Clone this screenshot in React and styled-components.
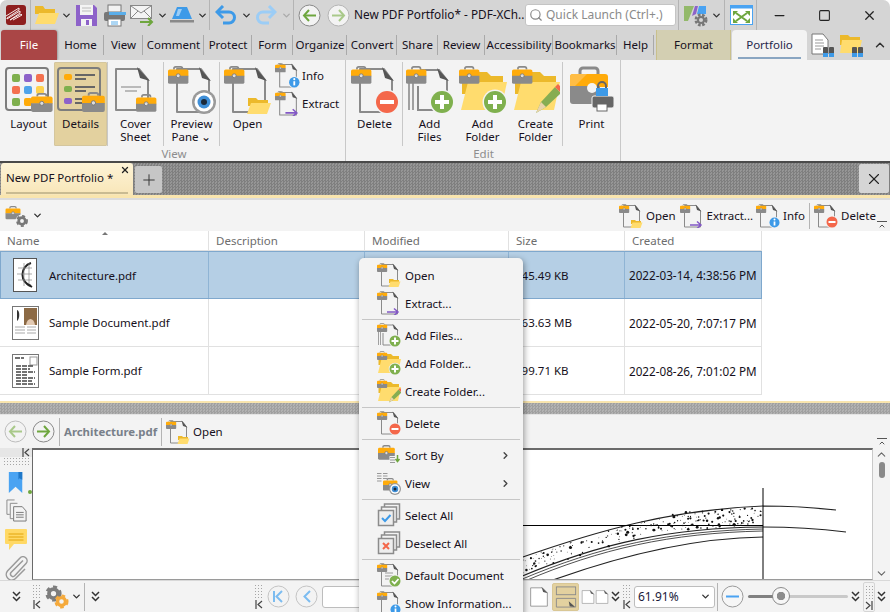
import React from 'react'
import styled, { createGlobalStyle } from 'styled-components'
import { Search, Minus, Square, X, Plus, ChevronDown, ChevronUp, ChevronRight } from 'lucide-react'

const GlobalStyle = createGlobalStyle`
  html, body { margin: 0; padding: 0; background: #fff; }
  body { font-family: "Noto Sans", "Liberation Sans", sans-serif; font-size: 11.5px; color: #161020; }
`

const Window = styled.div`
  position: relative;
  width: 890px;
  height: 612px;
  display: flex;
  flex-direction: column;
  overflow: hidden;
  background: #f3f3f3;
  border-radius: 7px 7px 0 0;
`

/* title bar */
const TitleBar = styled.div`
  height: 30px;
  flex: none;
  display: flex;
  align-items: center;
  padding-left: 4px;
  background: #d5d5d5;
`
const Quick = styled.div`
  width: ${p => p.$w}px;
  height: 30px;
  flex: none;
  display: flex;
  align-items: center;
  justify-content: center;
`
const VLine = styled.div`
  width: 1px;
  height: ${p => p.$h || 30}px;
  flex: none;
  background: #b4b4b4;
  margin: 0 ${p => p.$m ?? 1}px;
`
const TitleText = styled.div`
  width: 172px;
  flex: none;
  padding: 0 0 2px 1px;
  box-sizing: border-box;
  white-space: nowrap;
  overflow: hidden;
  font-size: 11.8px;
`
const QuickLaunch = styled.div`
  width: 151px;
  height: 22px;
  flex: none;
  box-sizing: border-box;
  display: flex;
  align-items: center;
  gap: 3px;
  padding: 0 0 1px 3px;
  background: #fff;
  border: 1px solid #c4c4c4;
  border-radius: 3px;
  color: #8b8b8b;
  font-size: 12px;
  white-space: nowrap;
`
const WinButton = styled.div`
  width: 45px;
  height: 30px;
  flex: none;
  display: flex;
  align-items: center;
  justify-content: center;
  color: #222;
`

/* ribbon tabs */
const TabRow = styled.div`
  height: 30px;
  flex: none;
  display: flex;
  align-items: stretch;
  background: #d5d5d5;
`
const FileTab = styled.div`
  width: 56px;
  margin-left: 1px;
  padding-bottom: 2px;
  box-sizing: border-box;
  display: flex;
  align-items: center;
  justify-content: center;
  background: #aa4646;
  border-radius: 3px 3px 0 0;
  box-shadow: 1px 0 2px rgba(0,0,0,.25);
  color: #fff;
`
const RibbonTab = styled.div`
  width: ${p => p.$w}px;
  flex: none;
  padding-bottom: 2px;
  box-sizing: border-box;
  display: flex;
  align-items: center;
  justify-content: center;
  white-space: nowrap;
  position: relative;
  &::after {
    content: '';
    position: absolute;
    right: 0;
    top: 5px;
    bottom: 5px;
    width: 1px;
    background: #a9a9a9;
  }
`
const FormatTab = styled.div`
  width: 75px;
  margin-left: 2px;
  padding-bottom: 2px;
  flex: none;
  display: flex;
  align-items: center;
  justify-content: center;
  background: #d3cfb2;
  border: solid #c9c08c;
  border-width: 0 1px;
  box-sizing: border-box;
`
const PortfolioTab = styled.div`
  width: 75px;
  margin-left: 1px;
  padding-bottom: 2px;
  flex: none;
  box-sizing: border-box;
  display: flex;
  align-items: center;
  justify-content: center;
  position: relative;
  background: #f3f3f3;
  border-radius: 4px 4px 0 0;
  color: #26264a;
  &::after {
    content: '';
    position: absolute;
    left: 6px;
    right: 6px;
    bottom: 1px;
    height: 2px;
    background: #8aa6c2;
  }
`
const TabTools = styled.div`
  display: flex;
  align-items: center;
  gap: 4px;
  padding-left: 3px;
`
const Collapse = styled.div`
  margin-left: auto;
  width: 20px;
  display: flex;
  align-items: center;
  justify-content: center;
  color: #333;
`

/* ribbon */
const Ribbon = styled.div`
  height: 101px;
  flex: none;
  display: flex;
  background: #f3f3f3;
  border-bottom: 2px solid #4a4a4a;
`
const Group = styled.div`
  width: ${p => p.$w}px;
  flex: none;
  box-sizing: border-box;
  padding: 2px 0 0 ${p => p.$pad || 0}px;
  display: flex;
  flex-direction: column;
  border-right: 1px solid #c8c8c8;
`
const GroupBody = styled.div`
  height: 84px;
  display: flex;
`
const GroupLabel = styled.div`
  text-align: center;
  color: #8d8d8d;
  line-height: 13px;
  padding-top: 1px;
`
const RibbonButton = styled.div`
  width: ${p => p.$w}px;
  flex: none;
  box-sizing: border-box;
  display: flex;
  flex-direction: column;
  align-items: center;
  padding-top: 3px;
  line-height: 13px;
  text-align: center;
  background: ${p => (p.$on ? '#e3d19f' : 'transparent')};
  border: 1px solid ${p => (p.$on ? '#d4c69e' : 'transparent')};
  border-radius: 1px;
  svg { margin-bottom: 3px; flex: none; }
`
const SmallStack = styled.div`
  display: flex;
  flex-direction: column;
  gap: 3px;
  padding-top: 1px;
`
const SmallButton = styled.div`
  display: flex;
  align-items: center;
  gap: 2px;
`
const GroupLine = styled.div`
  width: 1px;
  flex: none;
  background: #c8c8c8;
`

/* document tabs */
const dither = `repeating-conic-gradient(#7f7f7f 0 25%, #969696 0 50%) 0 0 / 3px 3px`
const TabStrip = styled.div`
  height: 32px;
  flex: none;
  display: flex;
  align-items: flex-end;
  background: ${dither};
`
const DocTab = styled.div`
  width: 132px;
  height: 32px;
  margin-left: 1px;
  padding: 0 0 3px 5px;
  box-sizing: border-box;
  position: relative;
  display: flex;
  align-items: center;
  background: linear-gradient(#fdf3d6, #f8e6b8);
  border-radius: 3px 3px 0 0;
  white-space: nowrap;
  &::after {
    content: '';
    position: absolute;
    left: 5px;
    right: 5px;
    bottom: 1px;
    height: 2px;
    background: #c9bb92;
  }
`
const TabClose = styled.span`
  position: absolute;
  right: 3px;
  top: 2px;
  display: flex;
  color: #222;
`
const NewTab = styled.div`
  width: 27px;
  height: 27px;
  margin: 0 0 2px 2px;
  display: flex;
  align-items: center;
  justify-content: center;
  background: #c6c6c6;
  border-radius: 2px;
  color: #333;
`
const StripClose = styled.div`
  width: 30px;
  height: 29px;
  margin: 0 1px 2px auto;
  display: flex;
  align-items: center;
  justify-content: center;
  background: #d5d5d5;
  border-radius: 2px;
  color: #222;
`
const AccentLine = styled.div`
  height: 3px;
  flex: none;
  background: #f9e5ae;
  border-bottom: 2px solid #dcdcdc;
`

/* portfolio toolbar */
const Toolbar = styled.div`
  height: ${p => p.$h}px;
  flex: none;
  display: flex;
  align-items: center;
  background: #f3f3f3;
  padding-left: ${p => p.$pad || 0}px;
  position: relative;
`
const ToolButton = styled.div`
  display: flex;
  align-items: center;
  gap: 3px;
  margin-left: ${p => p.$ml || 0}px;
  white-space: nowrap;
`
const PushRight = styled.div`
  margin-left: auto;
  display: flex;
  align-items: center;
`
const BarCollapse = styled.div`
  position: absolute;
  right: 3px;
  bottom: 0;
  width: 10px;
  height: 9px;
  border-top: 1px solid #555;
  display: flex;
  justify-content: center;
  color: #555;
`

/* file table */
const Table = styled.div`
  height: 170px;
  flex: none;
  background: #fff;
`
const Columns = styled.div`
  display: grid;
  grid-template-columns: 209px 156px 144px 116px 137px;
  width: 762px;
  box-sizing: border-box;
  height: ${p => p.$h}px;
  background: ${p => (p.$selected ? '#b5cfe5' : 'transparent')};
  outline: ${p => (p.$selected ? '1px solid #7fa8cd' : 'none')};
  outline-offset: -1px;
  border-bottom: ${p => (p.$selected ? '0' : '1px solid #e1e1e1')};
`
const HeadCell = styled.div`
  position: relative;
  display: flex;
  align-items: center;
  padding-left: 7px;
  color: #6d6d6d;
  border-right: 1px solid #e1e1e1;
`
const SortMark = styled.span`
  position: absolute;
  top: 1px;
  left: 102px;
  border: 3px solid transparent;
  border-top: 0;
  border-bottom: 3px solid #777;
`
const Cell = styled.div`
  display: flex;
  align-items: center;
  gap: 7px;
  padding-left: ${p => p.$pad ?? 3}px;
  border-right: 1px solid ${p => (p.$selected ? '#8fb4d4' : '#e1e1e1')};
  white-space: nowrap;
  overflow: hidden;
  font-size: ${p => (p.$date ? '11.7px' : 'inherit')};
`
const ThumbBox = styled.div`
  width: 34px;
  margin-left: 8px;
  flex: none;
  display: flex;
  justify-content: center;
`

/* splitter */
const Splitter = styled.div`
  height: 14px;
  flex: none;
  box-sizing: border-box;
  border-top: 2px solid #f9e5ae;
  border-bottom: 1px solid #e4e4e4;
  background: repeating-conic-gradient(#a0a0a0 0 25%, #b2b2b2 0 50%) 0 0 / 3px 3px;
`
const FileName = styled.div`
  font-weight: 700;
  color: #78808a;
  font-size: 11.4px;
`

/* viewer */
const DocRow = styled.div`
  flex: 1;
  min-height: 0;
  display: flex;
`
const SideBar = styled.div`
  width: 32px;
  flex: none;
  display: flex;
  flex-direction: column;
  align-items: center;
  background: #f3f3f3;
`
const SideHead = styled.div`
  align-self: stretch;
  height: 10px;
  background: #e6e6e6;
  display: flex;
  justify-content: flex-end;
  align-items: center;
  padding-right: 2px;
`
const Grip = styled.div`
  width: ${p => p.$w}px;
  height: ${p => p.$h}px;
  flex: none;
  background: radial-gradient(#a5a5a5 0.8px, transparent 1px) 0 0 / 3px 3px;
`
const SideIcons = styled.div`
  position: relative;
  display: flex;
  flex-direction: column;
  align-items: center;
  gap: 5px;
  margin-top: 4px;
`
const GreenDot = styled.span`
  position: absolute;
  right: -4px;
  top: 19px;
  width: 4px;
  height: 4px;
  border-radius: 50%;
  background: #6ea63e;
`
const Viewer = styled.div`
  flex: 1;
  box-sizing: border-box;
  background: #fff;
  border: 1px solid #6a6a6a;
  border-top-width: 2px;
  border-right-color: #c9c9c9;
  border-bottom-color: #9a9a9a;
  overflow: hidden;
  svg { display: block; }
`
const ScrollBar = styled.div`
  width: 17px;
  flex: none;
  display: flex;
  flex-direction: column;
  align-items: center;
  color: #666;
`
const ScrollThumb = styled.div`
  width: 6px;
  height: 16px;
  margin-top: 1px;
  border-radius: 3px;
  background: #8a8a8a;
`
const ScrollTrack = styled.div`
  flex: 1;
`

/* status bar */
const StatusBar = styled.div`
  height: 32px;
  flex: none;
  display: flex;
  align-items: center;
  background: #f3f3f3;
  border-top: 1px solid #d8d8d8;
  box-sizing: border-box;
  color: #333;
  svg { flex: none; }
`
const Gap = styled.div`
  width: ${p => p.$w}px;
  flex: none;
  display: flex;
  justify-content: center;
  align-items: center;
`
const GripCell = styled.div`
  width: ${p => p.$w || 10}px;
  flex: none;
  display: flex;
  flex-direction: column;
  align-items: center;
  gap: 1px;
`
const PageInput = styled.div`
  width: 60px;
  height: 22px;
  flex: none;
  box-sizing: border-box;
  background: #fff;
  border: 1px solid #bdbdbd;
  border-radius: 3px;
`
const ViewToggle = styled.div`
  width: 27px;
  height: 28px;
  flex: none;
  display: flex;
  align-items: center;
  justify-content: center;
  background: ${p => (p.$on ? '#e3d19f' : 'transparent')};
  border: 1px solid ${p => (p.$on ? '#d9c795' : 'transparent')};
  border-radius: 2px;
  box-sizing: border-box;
`
const ZoomSelect = styled.div`
  width: 81px;
  height: 22px;
  flex: none;
  box-sizing: border-box;
  display: flex;
  align-items: center;
  justify-content: space-between;
  padding: 0 3px;
  background: #fff;
  border: 1px solid #bdbdbd;
  border-radius: 3px;
  font-size: 12px;
  color: #1a1a3a;
`
const Slider = styled.div`
  width: 100px;
  height: 3px;
  flex: none;
  position: relative;
  background: linear-gradient(90deg, #808080 25%, #c9c9c9 25%);
  border-radius: 2px;
`
const SliderThumb = styled.div`
  position: absolute;
  left: 24px;
  top: -8px;
  width: 18px;
  height: 18px;
  box-sizing: border-box;
  background: radial-gradient(#8c8c8c 0 4px, #f6f6f6 4.5px);
  border: 1px solid #8c8c8c;
  border-radius: 50%;
`
const EndGrip = styled.div`
  width: 12px;
  height: 30px;
  flex: none;
  box-sizing: border-box;
  display: flex;
  flex-direction: column;
  align-items: center;
  gap: 1px;
  padding-top: 2px;
  border: 1px solid #d5d5d5;
  border-radius: 2px;
`

/* context menu */
const Menu = styled.div`
  position: absolute;
  left: 359px;
  top: 258px;
  width: 164px;
  padding-top: 3px;
  box-sizing: border-box;
  background: #f3f3f3;
  border-radius: 5px;
  box-shadow: 1px 2px 6px rgba(0,0,0,.4);
`
const MenuRow = styled.div`
  height: 28px;
  display: flex;
  align-items: center;
  position: relative;
  padding-left: 18px;
  gap: 4px;
  white-space: nowrap;
`
const MenuArrow = styled.span`
  position: absolute;
  right: 12px;
  display: flex;
  color: #444;
`
const MenuLine = styled.div`
  height: 1px;
  margin: 2px 3px 1px;
  background: #c6c6c6;
`

/* icon drawings */
const G = '#8a8a8a'

const CaseArt = ({ x = 0, y = 0, s = 1 }) => (
  <g transform={`translate(${x} ${y}) scale(${s})`}>
    <path d="M7 4V3a2 2 0 0 1 2-2h6a2 2 0 0 1 2 2v1" fill="none" stroke={G} strokeWidth="2" />
    <path d="M0 6a2 2 0 0 1 2-2h20a2 2 0 0 1 2 2v6H0z" fill="#ffab0a" />
    <path d="M0 11.500h24V19a2 2 0 0 1-2 2H2a2 2 0 0 1-2-2z" fill={G} />
    <circle cx="12" cy="11.500" r="2.300" fill="#ddd" stroke="#777" />
  </g>
)
const PageArt = ({ dx = 0 }) => (
  <g transform={`translate(${dx} 0)`}>
    <path d="M9 3H33L41 14V46H9Z" fill="none" stroke={G} strokeWidth="2" strokeLinejoin="round" />
    <path d="M31 1L43 15L34 12Z" fill="#555" />
  </g>
)
const FolderArt = ({ x = 0, y = 0, s = 1 }) => (
  <g transform={`translate(${x} ${y}) scale(${s})`}>
    <path d="M1 2h8l2 2h10v6H1z" fill="#ecb92b" />
    <path d="M4 7h20l-4 11H0z" fill="#ffdc6e" />
  </g>
)
const Badge = ({ c = '#7fb04e', cx = 36, cy = 36, r = 11, children }) => (
  <g>
    <circle cx={cx} cy={cy} r={r + 1.500} fill="#f3f3f3" />
    <circle cx={cx} cy={cy} r={r} fill={c} />
    {children}
  </g>
)
const PlusBadge = () => <Badge><path d="M36 29v14M29 36h14" stroke="#fff" strokeWidth="4" /></Badge>
const MinusBadge = () => <Badge c="#f4674a"><path d="M29 36h14" stroke="#fff" strokeWidth="4" /></Badge>
const InfoBadge = () => (
  <Badge c="#3d9ae8" cx={37} cy={37} r={10}>
    <path d="M37 35v8" stroke="#fff" strokeWidth="3.500" />
    <circle cx="37" cy="31" r="2" fill="#fff" />
  </Badge>
)
const CheckBadge = () => <Badge c="#7fb04e"><path d="M30 36l5 5 8-9" fill="none" stroke="#fff" strokeWidth="3.500" /></Badge>
const EyeBadge = () => (
  <g>
    <circle cx="36" cy="36" r="12" fill="#9a9a9a" />
    <circle cx="36" cy="36" r="9.500" fill="#fff" />
    <circle cx="36" cy="36" r="6.500" fill="#3f8fd8" />
    <circle cx="36" cy="36" r="3" fill="#1c2a3a" />
  </g>
)
const PurpleArrow = () => (
  <path d="M20 42H42M34 35l8 7-8 7" fill="none" stroke="#8358c6" strokeWidth="3" />
)
const PencilArt = ({ x = 0, y = 0, s = 1 }) => (
  <g transform={`translate(${x} ${y}) scale(${s})`}>
    <path d="M2 30l5-11 14-15 6 6-15 14z" fill="#86ad52" />
    <path d="M21 4l3-3 6 6-3 3z" fill="#f2694c" />
    <path d="M2 30l5-11 5 5z" fill="#e9d4aa" />
  </g>
)
const GearArt = ({ cx, cy, r, c }) => (
  <g fill="none" stroke={c}>
    <circle cx={cx} cy={cy} r={r * 0.6} strokeWidth={r * 0.5} />
    <circle cx={cx} cy={cy} r={r * 0.92} strokeWidth={r * 0.32} strokeDasharray={`${r * 0.56} ${r * 0.5}`} />
  </g>
)
const Stacked = () => (
  <g fill="none" stroke="#a0a0a0" strokeWidth="2">
    <path d="M3 16V44M7 14V44" />
    <path d="M14 4H33L41 14V44H12V20" stroke={G} />
    <path d="M31 2L43 15L34 12Z" fill="#555" stroke="none" />
  </g>
)
const BigFolder = ({ x = 0, y = 0, s = 1 }) => (
  <g transform={`translate(${x} ${y}) scale(${s})`}>
    <path d="M14 4H28l4 4h12v18H3V10z" fill="#ecb92b" />
    <path d="M9 14H48L42 42H2z" fill="#ffdc6e" />
  </g>
)

const DOTS = ['#7fb04e', '#8d62c9', '#f4714f', '#f4714f', '#4fa3ea', '#ffd24d', '#7fb04e', '#ffab0a', '#f3f3f3']

const ICONS = {
  open: <><PageArt /><CaseArt s={0.85} /><FolderArt x={23} y={30} s={1} /></>,
  extract: <><PageArt /><CaseArt s={0.85} /><PurpleArrow /></>,
  info: <><PageArt /><CaseArt s={0.85} /><InfoBadge /></>,
  del: <><PageArt /><CaseArt s={0.85} /><MinusBadge /></>,
  addFiles: <><Stacked /><CaseArt s={0.85} /><PlusBadge /></>,
  addFolder: <><BigFolder y={2} /><CaseArt s={0.85} /><PlusBadge /></>,
  createFolder: <><BigFolder y={2} /><CaseArt s={0.85} /><PencilArt x={22} y={17} /></>,
  preview: <><PageArt /><CaseArt s={0.85} /><EyeBadge /></>,
  layout: (
    <>
      <rect x="1" y="2" width="42" height="42" rx="3" fill="none" stroke="#7d7d7d" strokeWidth="2" />
      {DOTS.map((c, i) => (
        <rect key={i} x={7 + (i % 3) * 12} y={8 + Math.floor(i / 3) * 12} width="8" height="8" rx="2" fill={c} />
      ))}
      <CaseArt x={26} y={27} s={0.9} />
    </>
  ),
  details: (
    <>
      <rect x="1" y="2" width="42" height="42" rx="3" fill="none" stroke="#7d7d7d" strokeWidth="2" />
      <rect x="7" y="8" width="8" height="6" rx="2" fill="#ffab0a" />
      <rect x="7" y="20" width="8" height="6" rx="2" fill="#7fb04e" />
      <rect x="7" y="32" width="8" height="6" rx="2" fill="#8d62c9" />
      <path d="M18 9h20M18 13h11M18 21h20M18 25h11M18 33h8M18 37h8" stroke="#666" strokeWidth="2" />
      <CaseArt x={25} y={26} s={0.95} />
    </>
  ),
  cover: (
    <>
      <path d="M4 3H27L36 14V44H4Z" fill="none" stroke={G} strokeWidth="2" strokeLinejoin="round" />
      <path d="M25 1L38 15L28 12Z" fill="#555" />
      <path d="M9 21H29M13 25H25" stroke="#a8a8a8" strokeWidth="1.500" />
      <CaseArt x={24} y={28} s={0.85} />
    </>
  ),
  print: (
    <>
      <path d="M12 8V5a3 3 0 0 1 3-3h12a3 3 0 0 1 3 3v3" fill="none" stroke={G} strokeWidth="3" />
      <path d="M2 11a3 3 0 0 1 3-3h32a3 3 0 0 1 3 3v10H2z" fill="#ffab0a" />
      <path d="M2 11a3 3 0 0 1 3-3h14L6 21H2z" fill="#ffbd45" />
      <path d="M2 20h30v18H5a3 3 0 0 1-3-3z" fill={G} />
      <circle cx="24" cy="22" r="5" fill="#f3f3f3" />
      <path d="M29 30h15a2 2 0 0 1 2 2v8a2 2 0 0 1-2 2H26a2 2 0 0 1-2-2v-8a2 2 0 0 1 2-2z" fill="#666" stroke="#f3f3f3" />
      <rect x="28" y="22" width="12" height="8" fill="#3d9ae8" />
      <path d="M30 22v-2a4 4 0 0 1 8 0v2" fill="none" stroke="#666" strokeWidth="2" />
      <rect x="29" y="38" width="10" height="7" fill="#fff" stroke="#666" />
    </>
  ),
  caseGear: (
    <>
      <CaseArt x={1} y={4} s={1.250} />
      <circle cx="34" cy="34" r="13" fill="#f3f3f3" />
      <GearArt cx={34} cy={34} r={11} c="#777" />
    </>
  ),
  sort: (
    <>
      <CaseArt x={2} y={4} s={1.400} />
      <rect x="25" y="26" width="19" height="19" fill="#f3f3f3" />
      <path d="M26 29h10M26 34h10M26 39h10" stroke="#999" strokeWidth="2" />
      <path d="M41 24v12M37 32l4 5 4-5" fill="none" stroke="#6ea63e" strokeWidth="3" />
    </>
  ),
  viewMode: (
    <>
      <path d="M0 5h9M12 5h9M0 10h9M12 10h9M0 15h9M12 15h9M0 20h9" stroke="#999" strokeWidth="2" />
      <CaseArt x={12} y={14} s={1.200} />
      <EyeBadge />
    </>
  ),
  selectAll: (
    <>
      <path d="M15 8V2h30v30h-6M9 14V8h30v30h-6" fill="none" stroke="#8c8c8c" strokeWidth="3" />
      <rect x="3" y="15" width="30" height="30" fill="#eee" stroke="#8c8c8c" strokeWidth="3" />
      <path d="M10 30l6 6 11-12" fill="none" stroke="#3d9ae8" strokeWidth="4" />
    </>
  ),
  deselectAll: (
    <>
      <path d="M15 8V2h30v30h-6M9 14V8h30v30h-6" fill="none" stroke="#8c8c8c" strokeWidth="3" />
      <rect x="3" y="15" width="30" height="30" fill="#eee" stroke="#8c8c8c" strokeWidth="3" />
      <path d="M12 24l12 12M24 24L12 36" fill="none" stroke="#f4674a" strokeWidth="4" />
    </>
  ),
  defaultDoc: (
    <>
      <PageArt />
      <path d="M16 20h16M16 26h16M16 32h8" stroke="#999" strokeWidth="2" />
      <CaseArt s={0.85} />
      <CheckBadge />
    </>
  ),
  pagesStack: (
    <>
      <path d="M20 2H4v30h6" fill="none" stroke="#8a8a8a" strokeWidth="2" />
      <path d="M26 9H11v32h7" fill="none" stroke="#8a8a8a" strokeWidth="2" />
      <path d="M18 16H36L44 25V46H18Z" fill="#f3f3f3" stroke="#777" strokeWidth="2" strokeLinejoin="round" />
      <path d="M23 28h16M23 33h16M23 38h16" stroke="#777" strokeWidth="2" />
    </>
  ),
  note: (
    <>
      <path d="M4 4h40a2 2 0 0 1 2 2v26a2 2 0 0 1-2 2H20L10 46V34H4a2 2 0 0 1-2-2V6a2 2 0 0 1 2-2z" fill="#ffd966" />
      <path d="M9 14h30M9 20h30M9 26h30" stroke="#e2a50c" strokeWidth="2" />
    </>
  ),
  clip: (
    <path d="M38 10L14 34a5 5 0 0 0 7 7L44 16a8 8 0 0 0-12-11L7 31a11 11 0 0 0 16 15L42 27" fill="none" stroke="#9a9a9a" strokeWidth="3" transform="translate(0 -1)" />
  ),
  bookmark: (
    <>
      <path d="M8 2H36V46L22 33L8 46Z" fill="#4aa3f2" />
      <path d="M28 2H36V18L30 15L28 18Z" fill="#1f78c9" />
    </>
  ),
  gears: (
    <>
      <GearArt cx={17} cy={17} r={15} c="#7d7d7d" />
      <GearArt cx={33} cy={33} r={13} c="#f5a93a" />
    </>
  ),
  pdfPage: (
    <>
      <path d="M4 2H32L44 14V46H4Z" fill="#fff" stroke={G} strokeWidth="2" strokeLinejoin="round" />
      <path d="M30 0L45 15L34 12Z" fill="#555" />
    </>
  ),
  twoBox: (
    <>
      <rect x="3" y="2" width="42" height="17" fill="none" stroke={G} strokeWidth="2" />
      <path d="M3 27H45V46H3Z" fill="none" stroke={G} strokeWidth="2" />
      <path d="M30 33L44 46L32 44Z" fill="#555" />
    </>
  )
}

const Icon = ({ name, size = 24 }) => (
  <svg width={size} height={size} viewBox="0 0 48 48">{ICONS[name]}</svg>
)

const QuickFolder = () => (
  <svg width="24" height="20" viewBox="0 0 24 20">
    <path d="M0 1h8l2 3h10v5H0z" fill="#ecb92b" />
    <path d="M4 8h20l-4 11H0z" fill="#ffdc6e" />
  </svg>
)
const Save = () => (
  <svg width="23" height="23" viewBox="0 0 23 23">
    <path d="M1 1h18l3 3v18H1z" fill="#8d62c9" />
    <rect x="5" y="1" width="13" height="10" fill="#f3f3f3" />
    <path d="M7 4h9M7 7h9" stroke="#bbb" />
    <rect x="6" y="15" width="11" height="7" fill="#f3f3f3" />
    <rect x="11" y="16" width="3" height="5" fill="#8d62c9" />
  </svg>
)
const Printer = () => (
  <svg width="23" height="23" viewBox="0 0 23 23">
    <rect x="5" y="1" width="13" height="7" fill="#f3f3f3" stroke="#777" />
    <rect x="1" y="8" width="21" height="9" rx="2" fill="#777" />
    <rect x="6" y="8" width="17" height="3" fill="#5aaeea" />
    <rect x="5" y="15" width="13" height="7" fill="#fff" stroke="#777" />
    <path d="M8 18h7M8 20h7" stroke="#5aaeea" />
  </svg>
)
const Mail = () => (
  <svg width="24" height="22" viewBox="0 0 24 22">
    <rect x="0.500" y="1.500" width="21" height="13" fill="#f4f4f4" stroke="#888" />
    <path d="M1 2l10 7 10-7M1 14l7-7M21 14l-7-7" fill="none" stroke="#888" />
    <path d="M10 18h12M18 14l4 4-4 4" fill="none" stroke="#6ea63e" strokeWidth="2" />
  </svg>
)
const Stamp = () => (
  <svg width="24" height="20" viewBox="0 0 24 20">
    <path d="M7 2h10l5 12H2z" fill="#3d9ae8" />
    <path d="M8 4h4l-3 7H6z" fill="#9ccdf6" />
    <rect x="0" y="15" width="24" height="2.500" fill="#8a8a8a" />
  </svg>
)
const Undo = ({ flip, c }) => (
  <svg width="21" height="20" viewBox="0 0 21 20" transform={flip ? 'scale(-1 1)' : undefined}>
    <path d="M3 7h11a5 5 0 0 1 0 11H8" fill="none" stroke={c} strokeWidth="3" />
    <path d="M8 1L2 7l6 6" fill="none" stroke={c} strokeWidth="3" />
  </svg>
)
const NavCircle = ({ dir = 'right', c = '#6ea63e', edge = '#8a8a8a' }) => (
  <svg width="23" height="23" viewBox="0 0 23 23">
    <circle cx="11.500" cy="11.500" r="10.500" fill="#f3f3f3" stroke={edge} />
    <g fill="none" stroke={c} strokeWidth="2" transform={dir === 'left' ? 'rotate(180 11.500 11.500)' : undefined}>
      <path d="M5 11.500h12" />
      <path d="M12 6l5 5.500-5 5.500" />
    </g>
  </svg>
)
const FirstCircle = ({ bar }) => (
  <svg width="23" height="23" viewBox="0 0 23 23">
    <circle cx="11.500" cy="11.500" r="10.500" fill="#f3f3f3" stroke="#c4c4c4" />
    <path d="M15 6l-5.500 5.500 5.500 5.500" fill="none" stroke="#7cbcf0" strokeWidth="2" />
    {bar && <path d="M7 6v11" stroke="#7cbcf0" strokeWidth="2" />}
  </svg>
)
const MinusCircle = () => (
  <svg width="23" height="23" viewBox="0 0 23 23">
    <circle cx="11.500" cy="11.500" r="10.500" fill="#f6f6f6" stroke="#9a9a9a" />
    <path d="M5 11.500h13" stroke="#4aa3f2" strokeWidth="2" />
  </svg>
)
const AppLogo = () => (
  <svg width="20" height="20" viewBox="0 0 20 20">
    <rect x="0" y="0" width="20" height="20" rx="3" fill="#8e1f1f" />
    <path d="M0 11L13 3v2L1 13v1L14 6v2L4 15l11-6 1 1-9 5" fill="none" stroke="#fff" strokeWidth="0.900" />
  </svg>
)
const UiOptions = () => (
  <svg width="24" height="24" viewBox="0 0 24 24">
    <path d="M0 3h10L4 18H0z" fill="#93b96a" />
    <path d="M11 3h3l-2 8-4 2z" fill="#8d62c9" />
    <path d="M15 3h7v8h-9z" fill="#4aa3f2" />
    <circle cx="17" cy="17" r="5" fill="none" stroke="#777" strokeWidth="3" strokeDasharray="2.500 1.500" />
    <circle cx="17" cy="17" r="3" fill="none" stroke="#777" strokeWidth="2" />
  </svg>
)
const FullScreen = () => (
  <svg width="23" height="20" viewBox="0 0 23 20">
    <rect x="0.500" y="0.500" width="22" height="19" fill="#fff" stroke="#4aa3f2" />
    <rect x="0.500" y="0.500" width="22" height="3" fill="#4aa3f2" />
    <path d="M3 6h5l-5 5zM20 6h-5l5 5zM3 18h5l-5-5zM20 18h-5l5-5z" fill="#6ea63e" />
    <path d="M6 8l11 8M17 8L6 16" stroke="#6ea63e" strokeWidth="2" />
  </svg>
)
const DocFind = ({ folder }) => (
  <svg width="25" height="25" viewBox="0 0 25 25">
    {folder ? (
      <>
        <path d="M1 2h8l2 2h10v8H1z" fill="#ecb92b" />
        <path d="M3 7h20l-3 13H1z" fill="#ffdc6e" />
      </>
    ) : (
      <>
        <path d="M2 1H13L18 7V21H2Z" fill="#fff" stroke="#777" />
        <path d="M5 7h8M5 10h9M5 13h9M5 16h6" stroke="#999" />
      </>
    )}
    <rect x="13" y="14" width="5" height="9" rx="1" fill="#555" />
    <rect x="19" y="14" width="5" height="9" rx="1" fill="#555" />
    <rect x="13" y="20" width="5" height="4" fill="#3d9ae8" />
    <rect x="19" y="20" width="5" height="4" fill="#3d9ae8" />
  </svg>
)
const DoubleChevron = () => (
  <svg width="9" height="11" viewBox="0 0 9 11">
    <path d="M1 1l3.500 3.500L8 1M1 6l3.500 3.500L8 6" fill="none" stroke="#333" strokeWidth="1.500" />
  </svg>
)
const ToEdge = ({ right }) => (
  <svg width="8" height="9" viewBox="0 0 8 9" transform={right ? 'scale(-1 1)' : undefined}>
    <path d="M1 0v9M7 1L3 4.500 7 8" fill="none" stroke="#444" strokeWidth="1.200" />
  </svg>
)
const Caret = () => <ChevronDown size={11} strokeWidth={3} color="#333" />

const ThumbArch = () => (
  <svg width="24" height="34" viewBox="0 0 24 34">
    <rect x="0.500" y="0.500" width="23" height="33" fill="#fff" stroke="#555" />
    <path d="M18 5A12 12 0 0 0 18 28" fill="none" stroke="#222" strokeWidth="2" />
    <path d="M5 10h14M4 16h15M5 22h14M11 5v23M16 5v24" stroke="#888" strokeWidth="0.700" />
    <path d="M14 26l5 3" stroke="#222" strokeWidth="2" />
  </svg>
)
const ThumbDoc = () => (
  <svg width="27" height="34" viewBox="0 0 27 34">
    <rect x="0.500" y="0.500" width="26" height="33" fill="#fff" stroke="#777" />
    <rect x="12" y="2" width="13" height="17" fill="#8c6a45" />
    <path d="M14 19c1-8 8-8 9 0z" fill="#e2c9b2" />
    <path d="M5 4c3 0 3 9 0 11z" fill="#333" />
    <path d="M3 21h10M3 24h10M3 27h10M15 21h9M15 24h9M15 27h9" stroke="#aaa" />
  </svg>
)
const ThumbForm = () => (
  <svg width="27" height="34" viewBox="0 0 27 34">
    <rect x="0.500" y="0.500" width="26" height="33" fill="#fff" stroke="#777" />
    <rect x="18" y="3" width="7" height="8" fill="#fff" stroke="#999" />
    <path d="M3 4h9M4 12h18M4 15h14M4 18h19M4 21h12M4 24h19M4 27h16M4 30h19" stroke="#444" strokeWidth="1.500" strokeDasharray="5 1" />
  </svg>
)

const speckles = []
let seed = 7
const rnd = () => {
  seed = (seed * 16807) % 2147483647
  return seed / 2147483647
}
const topEdge = x => (x < 620 ? 558 - (x - 520) * 0.33 : 525 - (x - 620) * 0.22 + Math.max(0, x - 687) * 0.17)
const lowEdge = x => (x < 653 ? 575 - (x - 523) * 0.32 : 533 - (x - 653) * 0.06)
for (let i = 0; i < 230; i++) {
  const x = 523 + rnd() * 239
  const a = topEdge(x) + 1
  const b = lowEdge(x) - 1
  speckles.push({ x, y: a + rnd() * Math.max(0, b - a), r: 0.4 + rnd() * rnd() * 1.200 })
}

const Drawing = () => (
  <svg width="839" height="129" viewBox="33 450 839 129">
    <g fill="none" stroke="#222">
      <path d="M520 558C600 530 670 510 763 506Q800 506 836 510" strokeWidth="1.200" />
      <path d="M520 577C600 543 670 528 763 527Q805 527 846 532" strokeWidth="1.200" />
      <path d="M520 580C600 546 670 531 763 529" strokeWidth="0.800" />
      <path d="M525 581C600 549 670 533 763 531" strokeWidth="0.800" />
      <path d="M553 580C620 556 690 538 763 537" strokeWidth="1.200" />
      <path d="M520 525.500H763M763 488V580" stroke="#000" strokeWidth="1" />
    </g>
    {speckles.map((s, i) => <circle key={i} cx={s.x} cy={s.y} r={s.r} fill="#111" />)}
  </svg>
)

const tabs = [
  ['Home', 47], ['View', 39], ['Comment', 61], ['Protect', 48], ['Form', 41], ['Organize', 54],
  ['Convert', 50], ['Share', 41], ['Review', 47], ['Accessibility', 68], ['Bookmarks', 64], ['Help', 37]
]

const files = [
  { name: 'Architecture.pdf', size: '145.49 KB', date: '2022-03-14, 4:38:56 PM', thumb: <ThumbArch />, selected: true, h: 48 },
  { name: 'Sample Document.pdf', size: '163.63 MB', date: '2022-05-20, 7:07:17 PM', thumb: <ThumbDoc />, h: 48 },
  { name: 'Sample Form.pdf', size: '199.71 KB', date: '2022-08-26, 7:01:02 PM', thumb: <ThumbForm />, h: 48 }
]

const menu = [
  [['open', 'Open'], ['extract', 'Extract...']],
  [['addFiles', 'Add Files...'], ['addFolder', 'Add Folder...'], ['createFolder', 'Create Folder...']],
  [['del', 'Delete']],
  [['sort', 'Sort By', true], ['viewMode', 'View', true]],
  [['selectAll', 'Select All'], ['deselectAll', 'Deselect All']],
  [['defaultDoc', 'Default Document'], ['info', 'Show Information...']]
]

const App = () => (
  <Window>
    <GlobalStyle />
    <TitleBar>
      <Quick $w={24}><AppLogo /></Quick>
      <VLine $m={2} />
      <Quick $w={27}><QuickFolder /></Quick>
      <Quick $w={12}><Caret /></Quick>
      <Quick $w={28}><Save /></Quick>
      <Quick $w={28}><Printer /></Quick>
      <Quick $w={28}><Mail /></Quick>
      <Quick $w={12}><Caret /></Quick>
      <Quick $w={28}><Stamp /></Quick>
      <Quick $w={12}><Caret /></Quick>
      <VLine />
      <Quick $w={29}><Undo c="#3d9ae8" /></Quick>
      <Quick $w={12}><Caret /></Quick>
      <Quick $w={29}><Undo flip c="#9ccdf6" /></Quick>
      <Quick $w={11}><ChevronDown size={11} strokeWidth={3} color="#aaa" /></Quick>
      <VLine />
      <Quick $w={29}><NavCircle dir="left" /></Quick>
      <Quick $w={29}><NavCircle c="#a9c98a" edge="#b5b5b5" /></Quick>
      <TitleText>New PDF Portfolio* - PDF-XCh..</TitleText>
      <QuickLaunch><Search size={14} color="#888" />Quick Launch (Ctrl+.)</QuickLaunch>
      <VLine $m={2} />
      <Quick $w={30}><UiOptions /></Quick>
      <Quick $w={11}><Caret /></Quick>
      <VLine $m={2} />
      <Quick $w={29}><FullScreen /></Quick>
      <VLine $m={0} />
      <WinButton><Minus size={15} /></WinButton>
      <WinButton><Square size={13} /></WinButton>
      <WinButton><X size={15} /></WinButton>
    </TitleBar>

    <TabRow>
      <FileTab>File</FileTab>
      {tabs.map(([label, w]) => <RibbonTab key={label} $w={w}>{label}</RibbonTab>)}
      <FormatTab>Format</FormatTab>
      <PortfolioTab>Portfolio</PortfolioTab>
      <TabTools>
        <DocFind />
        <DocFind folder />
      </TabTools>
      <Collapse><ChevronUp size={14} strokeWidth={2.500} /></Collapse>
    </TabRow>

    <Ribbon>
      <Group $w={346} $pad={3}>
        <GroupBody>
          <RibbonButton $w={51}><Icon name="layout" size={48} />Layout</RibbonButton>
          <RibbonButton $w={53} $on><Icon name="details" size={48} />Details</RibbonButton>
          <GroupLine />
          <RibbonButton $w={55}><Icon name="cover" size={48} />Cover<br />Sheet</RibbonButton>
          <GroupLine />
          <RibbonButton $w={55}><Icon name="preview" size={48} />Preview<br />Pane ⌄</RibbonButton>
          <GroupLine />
          <RibbonButton $w={55}><Icon name="open" size={48} />Open</RibbonButton>
          <SmallStack>
            <SmallButton><Icon name="info" size={25} />Info</SmallButton>
            <SmallButton><Icon name="extract" size={25} />Extract</SmallButton>
          </SmallStack>
        </GroupBody>
        <GroupLabel>View</GroupLabel>
      </Group>
      <Group $w={275} $pad={1}>
        <GroupBody>
          <RibbonButton $w={55}><Icon name="del" size={48} />Delete</RibbonButton>
          <GroupLine />
          <RibbonButton $w={53}><Icon name="addFiles" size={48} />Add<br />Files</RibbonButton>
          <RibbonButton $w={53}><Icon name="addFolder" size={48} />Add<br />Folder</RibbonButton>
          <RibbonButton $w={53}><Icon name="createFolder" size={48} />Create<br />Folder</RibbonButton>
          <GroupLine />
          <RibbonButton $w={57}><Icon name="print" size={48} />Print</RibbonButton>
        </GroupBody>
        <GroupLabel>Edit</GroupLabel>
      </Group>
    </Ribbon>

    <TabStrip>
      <DocTab>
        New PDF Portfolio *
        <TabClose><X size={10} strokeWidth={3} /></TabClose>
      </DocTab>
      <NewTab><Plus size={18} strokeWidth={1.300} /></NewTab>
      <StripClose><X size={18} strokeWidth={1.500} /></StripClose>
    </TabStrip>
    <AccentLine />

    <Toolbar $h={31} $pad={5}>
      <Icon name="caseGear" size={24} />
      <ToolButton $ml={3}><Caret /></ToolButton>
      <PushRight>
        <ToolButton><Icon name="open" size={24} />Open</ToolButton>
        <ToolButton $ml={4}><Icon name="extract" size={24} />Extract...</ToolButton>
        <ToolButton $ml={3}><Icon name="info" size={24} />Info</ToolButton>
        <ToolButton $ml={3}><VLine $h={26} $m={1} /><Icon name="del" size={24} />Delete</ToolButton>
        <Gap $w={14} />
      </PushRight>
      <BarCollapse><ChevronUp size={8} strokeWidth={3} /></BarCollapse>
    </Toolbar>

    <Table>
      <Columns $h={20}>
        <HeadCell>Name<SortMark /></HeadCell>
        <HeadCell>Description</HeadCell>
        <HeadCell>Modified</HeadCell>
        <HeadCell>Size</HeadCell>
        <HeadCell>Created</HeadCell>
      </Columns>
      {files.map(f => (
        <Columns key={f.name} $h={f.h} $selected={f.selected}>
          <Cell $pad={0} $selected={f.selected}>
            <ThumbBox>{f.thumb}</ThumbBox>
            <span>{f.name}</span>
          </Cell>
          <Cell $selected={f.selected} />
          <Cell $selected={f.selected} />
          <Cell $pad={6} $selected={f.selected}>{f.size}</Cell>
          <Cell $pad={4} $date $selected={f.selected}>{f.date}</Cell>
        </Columns>
      ))}
    </Table>

    <Splitter />

    <Toolbar $h={33} $pad={4}>
      <NavCircle dir="left" c="#a9c98a" edge="#bdbdbd" />
      <Gap $w={5} />
      <NavCircle />
      <VLine $h={28} $m={4} />
      <FileName>Architecture.pdf</FileName>
      <VLine $h={28} $m={4} />
      <ToolButton><Icon name="open" size={24} />Open</ToolButton>
      <BarCollapse><ChevronUp size={8} strokeWidth={3} /></BarCollapse>
    </Toolbar>

    <DocRow>
      <SideBar>
        <SideHead><ToEdge /></SideHead>
        <Grip $w={26} $h={10} />
        <SideIcons>
          <Icon name="bookmark" size={23} />
          <GreenDot />
          <Icon name="pagesStack" size={23} />
          <Icon name="note" size={24} />
          <Icon name="clip" size={24} />
        </SideIcons>
      </SideBar>
      <Viewer><Drawing /></Viewer>
      <ScrollBar>
        <ChevronUp size={13} strokeWidth={2} />
        <ScrollThumb />
        <ScrollTrack />
        <ChevronDown size={13} strokeWidth={2} />
      </ScrollBar>
    </DocRow>

    <StatusBar>
      <Gap $w={32}><DoubleChevron /></Gap>
      <GripCell><Grip $w={10} $h={15} /><ToEdge /></GripCell>
      <Gap $w={3} />
      <Icon name="gears" size={24} />
      <Gap $w={14}><Caret /></Gap>
      <VLine $h={28} $m={1} />
      <Gap $w={18}><DoubleChevron /></Gap>
      <Gap $w={150} />
      <GripCell><Grip $w={10} $h={15} /><ToEdge /></GripCell>
      <Gap $w={3} />
      <FirstCircle bar />
      <Gap $w={5} />
      <FirstCircle />
      <Gap $w={4} />
      <PageInput />
      <Gap $w={147} />
      <Icon name="pdfPage" size={20} />
      <Gap $w={3} />
      <ViewToggle $on><Icon name="twoBox" size={22} /></ViewToggle>
      <Gap $w={2} />
      <Icon name="pdfPage" size={14} />
      <Icon name="pdfPage" size={14} />
      <Gap $w={12}><DoubleChevron /></Gap>
      <Gap $w={1} />
      <GripCell $w={9}><Grip $w={9} $h={15} /><ToEdge /></GripCell>
      <Gap $w={3} />
      <ZoomSelect>61.91%<Caret /></ZoomSelect>
      <VLine $h={28} $m={2} />
      <Gap $w={1} />
      <MinusCircle />
      <Gap $w={4} />
      <Slider><SliderThumb /></Slider>
      <Gap $w={15}><DoubleChevron /></Gap>
      <EndGrip><Grip $w={8} $h={15} /><ToEdge right /></EndGrip>
      <Gap $w={12}><DoubleChevron /></Gap>
    </StatusBar>

    <Menu>
      {menu.map((group, i) => (
        <React.Fragment key={i}>
          {i > 0 && <MenuLine />}
          {group.map(([icon, label, more]) => (
            <MenuRow key={label}>
              <Icon name={icon} size={24} />
              {label}
              {more && <MenuArrow><ChevronRight size={11} strokeWidth={3} /></MenuArrow>}
            </MenuRow>
          ))}
        </React.Fragment>
      ))}
    </Menu>
  </Window>
)

export default App
